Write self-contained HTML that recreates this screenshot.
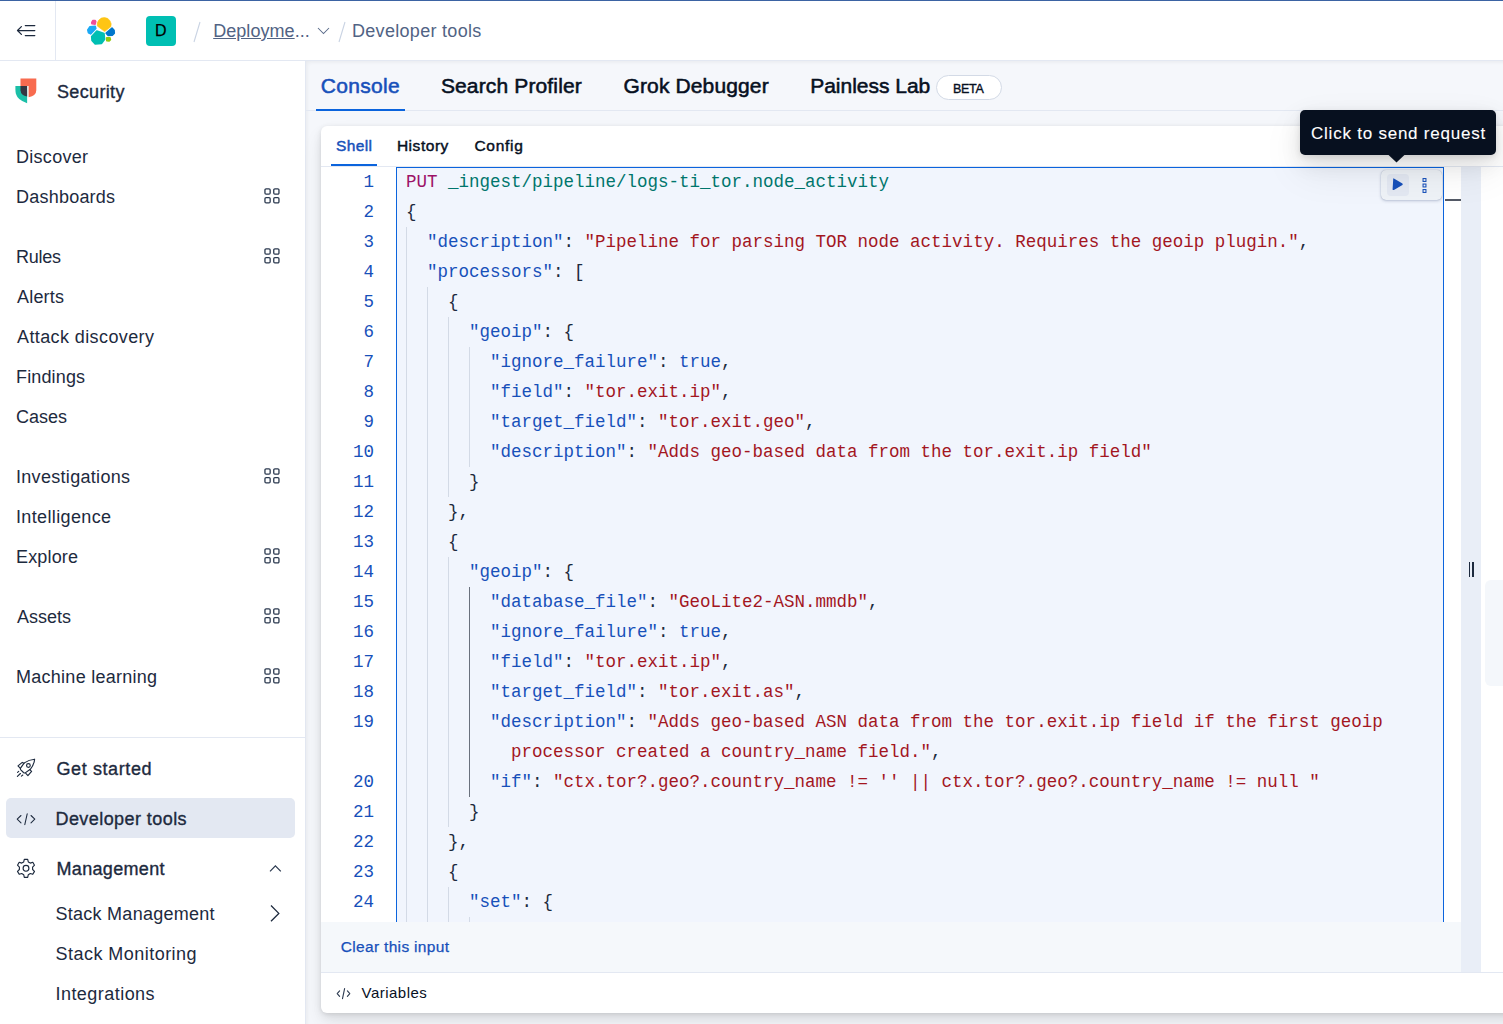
<!DOCTYPE html>
<html><head><meta charset="utf-8">
<style>
*{margin:0;padding:0;box-sizing:border-box}
html,body{width:1503px;height:1024px;overflow:hidden;background:#fff;font-family:"Liberation Sans",sans-serif;color:#1d2a3e}
.a{position:absolute}
.t{position:absolute;white-space:nowrap;line-height:1}
.nav{font-size:18px;color:#1d2a3e;letter-spacing:0.15px}
.med{-webkit-text-stroke:0.35px #1d2a3e}
.code{position:absolute;left:406px;top:167px;font-family:"Liberation Mono",monospace;font-size:17.5px;line-height:30px;white-space:pre;color:#1d2a3e}
.ln{position:absolute;left:322px;width:52px;top:167px;text-align:right;font-family:"Liberation Mono",monospace;font-size:17.5px;line-height:30px;color:#1750ba;white-space:pre}
.k{color:#1750ba}.s{color:#a3161f}.m{color:#9c1167}.u{color:#00756c}.b{color:#1750ba}
.g{position:absolute;width:1px;background:#d3dae6}
.tab{font-size:21px;font-weight:400;color:#07101f;-webkit-text-stroke:0.55px currentColor}
.stab{font-size:15.5px;font-weight:400;color:#07101f;-webkit-text-stroke:0.45px currentColor}
</style></head><body>

<!-- header -->
<div class="a" style="left:0;top:0;width:1503px;height:1px;background:#3b63a3"></div>
<div class="a" style="left:0;top:60px;width:1503px;height:1px;background:#e3e8f2"></div>
<div class="a" style="left:55px;top:1px;width:1px;height:59px;background:#e3e8f2"></div>
<svg class="a" style="left:16px;top:22px" width="20" height="16" viewBox="0 0 20 16"><g fill="none" stroke="#1d2a3e" stroke-width="1.25" stroke-linecap="round" stroke-linejoin="round"><path d="M1.6 8.5 H18.8 M5.4 4.6 L1.5 8.5 L5.4 12.4 M9.3 3.5 H18.8 M9.3 13.5 H18.8"/></g></svg>

<!-- elastic logo -->
<svg class="a" style="left:80px;top:10px" width="40" height="40" viewBox="80 10 40 40"><g stroke-linejoin="round" stroke-width="1.6">
<path d="M91.8 22.3 L92.8 20.6 L95.2 20.5 L95.7 21.5 L95.1 24.1 L91.9 23.8Z" fill="#f04e98" stroke="#f04e98"/>
<path d="M97.3 26 A7 7 0 1 1 110.8 26.8 L104.6 31.6 Z" fill="#fec514" stroke="#fec514" stroke-width="0.6"/>
<path d="M87.8 30 L89.8 26.8 L95.2 26.2 L95.8 28.4 L90.6 33.9 L88.5 32.8Z" fill="#1ba9f5" stroke="#1ba9f5"/>
<path d="M91.7 36.6 L96.8 31.1 L104 33.6 L104.6 39.2 L101.6 43.4 L95.2 43.9 L92 40.4Z" fill="#00bfb3" stroke="#00bfb3"/>
<path d="M106.2 33.2 L112 28 L114 30.2 L114.3 33.2 L112.3 35.3 L108.2 35.4Z" fill="#0077cc" stroke="#0077cc"/>
<path d="M106.7 37.9 L110 37.9 L110.4 39.6 L109.1 41 L106.8 40.8Z" fill="#93c90e" stroke="#93c90e"/>
</g></svg>

<div class="a" style="left:146px;top:16px;width:30px;height:30px;background:#00bfb3;border-radius:4px"></div>
<div class="t" style="left:145.5px;top:23px;width:30.5px;text-align:center;font-size:16px;color:#000;-webkit-text-stroke:0.25px #000">D</div>

<svg class="a" style="left:192px;top:21px" width="10" height="22"><path d="M8 1 L2 21" stroke="#c9d3e3" stroke-width="1.1"/></svg>
<div id="dep" class="t" style="left:213.20px;top:21.5px;font-size:18px;color:#516384;letter-spacing:0.050px"><span style="text-decoration:underline;text-underline-offset:1px">Deployme</span>...</div>
<svg class="a" style="left:316px;top:25px" width="15" height="11"><path d="M2 3 L7.5 8.5 L13 3" fill="none" stroke="#5a6b8a" stroke-width="1.05"/></svg>
<svg class="a" style="left:337px;top:21px" width="10" height="22"><path d="M8 1 L2 21" stroke="#c9d3e3" stroke-width="1.1"/></svg>
<div id="h2" class="t" style="left:352.00px;top:21.5px;font-size:18px;color:#516384;letter-spacing:0.300px">Developer tools</div>

<!-- sidebar -->
<div class="a" style="left:305px;top:61px;width:1px;height:963px;background:#e3e8f2"></div>


<!-- security -->
<svg class="a" style="left:15px;top:78px" width="23" height="26" viewBox="0 0 23 26">
<path d="M5.5 0.5 H21.3 V12.2 Q21.3 17.6 13.6 19.3 V8 H5.5Z" fill="#f86b4f"/>
<path d="M0.4 8 H12.1 V25.2 Q2.6 22.2 0.9 15.8 Q0.4 13.8 0.4 11.8 Z" fill="#1bbfa7"/>
<path d="M5.5 8 H12.1 V18.6 Q5.9 17.4 5.5 12.2 Z" fill="#343741"/>
</svg>
<div id="sec" class="t nav med" style="left:57.00px;top:83.00px;font-size:18px;letter-spacing:0.343px">Security</div>
<div id="n1" class="t nav" style="left:16.00px;top:147.7px;letter-spacing:0.284px">Discover</div>
<div id="n2" class="t nav" style="left:16.00px;top:187.6px;letter-spacing:0.223px">Dashboards</div>
<svg class="a" style="left:263px;top:187px" width="18" height="17"><path d="M3.1 1.85h2.9a1.15 1.15 0 0 1 1.15 1.15v2.9a1.15 1.15 0 0 1-1.15 1.15h-2.9a1.15 1.15 0 0 1-1.15-1.15v-2.9a1.15 1.15 0 0 1 1.15-1.15z M11.9 1.85h2.9a1.15 1.15 0 0 1 1.15 1.15v2.9a1.15 1.15 0 0 1-1.15 1.15h-2.9a1.15 1.15 0 0 1-1.15-1.15v-2.9a1.15 1.15 0 0 1 1.15-1.15z M3.1 10.65h2.9a1.15 1.15 0 0 1 1.15 1.15v2.9a1.15 1.15 0 0 1-1.15 1.15h-2.9a1.15 1.15 0 0 1-1.15-1.15v-2.9a1.15 1.15 0 0 1 1.15-1.15z M11.9 10.65h2.9a1.15 1.15 0 0 1 1.15 1.15v2.9a1.15 1.15 0 0 1-1.15 1.15h-2.9a1.15 1.15 0 0 1-1.15-1.15v-2.9a1.15 1.15 0 0 1 1.15-1.15z" fill="none" stroke="#2b394f" stroke-width="1.3"/></svg>
<div id="n3" class="t nav" style="left:16.00px;top:247.7px;letter-spacing:-0.250px">Rules</div>
<svg class="a" style="left:263px;top:247px" width="18" height="17"><path d="M3.1 1.85h2.9a1.15 1.15 0 0 1 1.15 1.15v2.9a1.15 1.15 0 0 1-1.15 1.15h-2.9a1.15 1.15 0 0 1-1.15-1.15v-2.9a1.15 1.15 0 0 1 1.15-1.15z M11.9 1.85h2.9a1.15 1.15 0 0 1 1.15 1.15v2.9a1.15 1.15 0 0 1-1.15 1.15h-2.9a1.15 1.15 0 0 1-1.15-1.15v-2.9a1.15 1.15 0 0 1 1.15-1.15z M3.1 10.65h2.9a1.15 1.15 0 0 1 1.15 1.15v2.9a1.15 1.15 0 0 1-1.15 1.15h-2.9a1.15 1.15 0 0 1-1.15-1.15v-2.9a1.15 1.15 0 0 1 1.15-1.15z M11.9 10.65h2.9a1.15 1.15 0 0 1 1.15 1.15v2.9a1.15 1.15 0 0 1-1.15 1.15h-2.9a1.15 1.15 0 0 1-1.15-1.15v-2.9a1.15 1.15 0 0 1 1.15-1.15z" fill="none" stroke="#2b394f" stroke-width="1.3"/></svg>
<div id="n4" class="t nav" style="left:17.00px;top:287.7px;letter-spacing:0.200px">Alerts</div>
<div id="n5" class="t nav" style="left:17.00px;top:327.7px;letter-spacing:0.398px">Attack discovery</div>
<div id="n6" class="t nav" style="left:16.00px;top:367.7px;letter-spacing:0.145px">Findings</div>
<div id="n7" class="t nav" style="left:16.00px;top:407.7px;letter-spacing:0.000px">Cases</div>
<div id="n8" class="t nav" style="left:16.00px;top:467.7px;letter-spacing:0.304px">Investigations</div>
<svg class="a" style="left:263px;top:467px" width="18" height="17"><path d="M3.1 1.85h2.9a1.15 1.15 0 0 1 1.15 1.15v2.9a1.15 1.15 0 0 1-1.15 1.15h-2.9a1.15 1.15 0 0 1-1.15-1.15v-2.9a1.15 1.15 0 0 1 1.15-1.15z M11.9 1.85h2.9a1.15 1.15 0 0 1 1.15 1.15v2.9a1.15 1.15 0 0 1-1.15 1.15h-2.9a1.15 1.15 0 0 1-1.15-1.15v-2.9a1.15 1.15 0 0 1 1.15-1.15z M3.1 10.65h2.9a1.15 1.15 0 0 1 1.15 1.15v2.9a1.15 1.15 0 0 1-1.15 1.15h-2.9a1.15 1.15 0 0 1-1.15-1.15v-2.9a1.15 1.15 0 0 1 1.15-1.15z M11.9 10.65h2.9a1.15 1.15 0 0 1 1.15 1.15v2.9a1.15 1.15 0 0 1-1.15 1.15h-2.9a1.15 1.15 0 0 1-1.15-1.15v-2.9a1.15 1.15 0 0 1 1.15-1.15z" fill="none" stroke="#2b394f" stroke-width="1.3"/></svg>
<div id="n9" class="t nav" style="left:16.00px;top:507.7px;letter-spacing:0.361px">Intelligence</div>
<div id="n10" class="t nav" style="left:16.00px;top:547.7px;letter-spacing:0.167px">Explore</div>
<svg class="a" style="left:263px;top:547px" width="18" height="17"><path d="M3.1 1.85h2.9a1.15 1.15 0 0 1 1.15 1.15v2.9a1.15 1.15 0 0 1-1.15 1.15h-2.9a1.15 1.15 0 0 1-1.15-1.15v-2.9a1.15 1.15 0 0 1 1.15-1.15z M11.9 1.85h2.9a1.15 1.15 0 0 1 1.15 1.15v2.9a1.15 1.15 0 0 1-1.15 1.15h-2.9a1.15 1.15 0 0 1-1.15-1.15v-2.9a1.15 1.15 0 0 1 1.15-1.15z M3.1 10.65h2.9a1.15 1.15 0 0 1 1.15 1.15v2.9a1.15 1.15 0 0 1-1.15 1.15h-2.9a1.15 1.15 0 0 1-1.15-1.15v-2.9a1.15 1.15 0 0 1 1.15-1.15z M11.9 10.65h2.9a1.15 1.15 0 0 1 1.15 1.15v2.9a1.15 1.15 0 0 1-1.15 1.15h-2.9a1.15 1.15 0 0 1-1.15-1.15v-2.9a1.15 1.15 0 0 1 1.15-1.15z" fill="none" stroke="#2b394f" stroke-width="1.3"/></svg>
<div id="n11" class="t nav" style="left:17.00px;top:607.7px;letter-spacing:0.000px">Assets</div>
<svg class="a" style="left:263px;top:607px" width="18" height="17"><path d="M3.1 1.85h2.9a1.15 1.15 0 0 1 1.15 1.15v2.9a1.15 1.15 0 0 1-1.15 1.15h-2.9a1.15 1.15 0 0 1-1.15-1.15v-2.9a1.15 1.15 0 0 1 1.15-1.15z M11.9 1.85h2.9a1.15 1.15 0 0 1 1.15 1.15v2.9a1.15 1.15 0 0 1-1.15 1.15h-2.9a1.15 1.15 0 0 1-1.15-1.15v-2.9a1.15 1.15 0 0 1 1.15-1.15z M3.1 10.65h2.9a1.15 1.15 0 0 1 1.15 1.15v2.9a1.15 1.15 0 0 1-1.15 1.15h-2.9a1.15 1.15 0 0 1-1.15-1.15v-2.9a1.15 1.15 0 0 1 1.15-1.15z M11.9 10.65h2.9a1.15 1.15 0 0 1 1.15 1.15v2.9a1.15 1.15 0 0 1-1.15 1.15h-2.9a1.15 1.15 0 0 1-1.15-1.15v-2.9a1.15 1.15 0 0 1 1.15-1.15z" fill="none" stroke="#2b394f" stroke-width="1.3"/></svg>
<div id="n12" class="t nav" style="left:16.00px;top:667.7px;letter-spacing:0.267px">Machine learning</div>
<svg class="a" style="left:263px;top:667px" width="18" height="17"><path d="M3.1 1.85h2.9a1.15 1.15 0 0 1 1.15 1.15v2.9a1.15 1.15 0 0 1-1.15 1.15h-2.9a1.15 1.15 0 0 1-1.15-1.15v-2.9a1.15 1.15 0 0 1 1.15-1.15z M11.9 1.85h2.9a1.15 1.15 0 0 1 1.15 1.15v2.9a1.15 1.15 0 0 1-1.15 1.15h-2.9a1.15 1.15 0 0 1-1.15-1.15v-2.9a1.15 1.15 0 0 1 1.15-1.15z M3.1 10.65h2.9a1.15 1.15 0 0 1 1.15 1.15v2.9a1.15 1.15 0 0 1-1.15 1.15h-2.9a1.15 1.15 0 0 1-1.15-1.15v-2.9a1.15 1.15 0 0 1 1.15-1.15z M11.9 10.65h2.9a1.15 1.15 0 0 1 1.15 1.15v2.9a1.15 1.15 0 0 1-1.15 1.15h-2.9a1.15 1.15 0 0 1-1.15-1.15v-2.9a1.15 1.15 0 0 1 1.15-1.15z" fill="none" stroke="#2b394f" stroke-width="1.3"/></svg>
<div class="a" style="left:0;top:737px;width:305px;height:1px;background:#e3e8f2"></div>
<div class="a" style="left:6px;top:798px;width:289px;height:40px;background:#e3e8f2;border-radius:5px"></div>
<div id="b1" class="t nav med" style="left:56.50px;top:759.6px;letter-spacing:0.600px">Get started</div>
<div id="b2" class="t nav med" style="left:55.50px;top:809.70px;letter-spacing:0.428px">Developer tools</div>
<div id="b3" class="t nav med" style="left:56.50px;top:859.50px;letter-spacing:0.331px">Management</div>
<div id="b4" class="t nav" style="left:55.50px;top:904.90px;letter-spacing:0.266px">Stack Management</div>
<div id="b5" class="t nav" style="left:55.50px;top:945.00px;letter-spacing:0.467px">Stack Monitoring</div>
<div id="b6" class="t nav" style="left:55.50px;top:984.90px;letter-spacing:0.454px">Integrations</div>
<svg class="a" style="left:268px;top:862px" width="16" height="12"><path d="M2 9.4 L7.4 3.9 L12.8 9.4" fill="none" stroke="#2b394f" stroke-width="1.2"/></svg>
<svg class="a" style="left:268px;top:903px" width="14" height="20"><path d="M3 2.5 L10.8 10.4 L3 18.3" fill="none" stroke="#1d2a3e" stroke-width="1.3"/></svg>
<!-- rocket -->
<svg class="a" style="left:15px;top:757px" width="22" height="22" viewBox="0 0 22 22"><g fill="none" stroke="#1d2a3e" stroke-width="1.15" stroke-linejoin="round" stroke-linecap="round">
<path d="M9.3 5.9 Q14 2.6 19.6 2.2 Q19.2 7.5 15.3 12.3 L10.6 15.6 Q9.5 16.4 8.5 15.5 L5.8 12.8 Q5 11.8 5.7 10.8 Z"/>
<path d="M8.9 6.2 L7.3 5.4 L3 8.9 L5.4 11.3 M14.8 12.6 L16.6 14.3 L12.9 18.6 L10.8 16.3"/>
<circle cx="13.4" cy="8.5" r="1.85"/><path d="M2.4 19.4 L5.4 16.5 M2.6 15.4 L3.7 14.4 M6.4 19.1 L7.8 18"/></g></svg>
<!-- code icon -->
<svg class="a" style="left:15px;top:812px" width="22" height="15" viewBox="0 0 22 15"><g fill="none" stroke="#1d2a3e" stroke-width="1.05" stroke-linecap="round" stroke-linejoin="round"><path d="M6 3.5 L2.2 7.2 L6 10.9 M16 3.5 L19.8 7.2 L16 10.9 M12.2 1.8 L9.8 12.6"/></g></svg>
<!-- gear -->
<svg class="a" style="left:15px;top:856.7px" width="22" height="23" viewBox="0 0 22 23"><g fill="none" stroke="#1d2a3e" stroke-width="1.15" stroke-linejoin="round">
<path d="M9.3 2.3 H12.7 L13.3 4.9 L15.3 6.1 L17.8 5.3 L19.5 8.2 L17.6 10.1 V12.5 L19.5 14.4 L17.8 17.3 L15.3 16.5 L13.3 17.7 L12.7 20.3 H9.3 L8.7 17.7 L6.7 16.5 L4.2 17.3 L2.5 14.4 L4.4 12.5 V10.1 L2.5 8.2 L4.2 5.3 L6.7 6.1 L8.7 4.9 Z"/>
<circle cx="11" cy="11.3" r="2.9"/></g></svg>


<!-- main bg -->
<div class="a" style="left:306px;top:61px;width:1197px;height:963px;background:#f5f7fb;box-shadow:inset 3px 3px 4px -2px rgba(0,0,0,0.06)"></div>
<!-- tabs -->
<div class="a" style="left:306px;top:110px;width:1197px;height:1px;background:#e3e8f2"></div>
<div class="a" style="left:316px;top:109px;width:89px;height:2px;background:#0b64dd"></div>
<div id="tab1" class="t tab" style="left:320.80px;top:74.80px;color:#1750ba;letter-spacing:0.301px">Console</div>
<div id="tab2" class="t tab" style="left:440.90px;top:74.80px;letter-spacing:0.143px">Search Profiler</div>
<div id="tab3" class="t tab" style="left:623.50px;top:74.80px;letter-spacing:0.133px">Grok Debugger</div>
<div id="tab4" class="t tab" style="left:810.20px;top:74.80px;letter-spacing:-0.015px">Painless Lab</div>
<div class="a" style="left:936px;top:75px;width:66px;height:25px;border:1px solid #d3dae6;border-radius:13px;background:#fff"></div>
<div id="beta" class="t" style="left:953.10px;top:82.5px;font-size:12.5px;font-weight:400;-webkit-text-stroke:0.35px #07101f;letter-spacing:-0.335px;color:#07101f">BETA</div>
<!-- panel -->
<div class="a" style="left:321px;top:126px;width:1200px;height:887px;background:#fff;border-radius:6px;box-shadow:0 1px 4px rgba(0,0,0,0.09),0 4px 10px rgba(0,0,0,0.07),0 10px 20px rgba(0,0,0,0.07)"></div>
<div id="st1" class="t stab" style="left:336.00px;top:137.60px;color:#1750ba;letter-spacing:0.350px">Shell</div>
<div id="st2" class="t stab" style="left:396.90px;top:137.60px;letter-spacing:0.535px">History</div>
<div id="st3" class="t stab" style="left:474.40px;top:137.60px;letter-spacing:0.720px">Config</div>
<div class="a" style="left:321px;top:166px;width:1182px;height:1px;background:#e3e8f2"></div>
<div class="a" style="left:331px;top:164px;width:46px;height:2px;background:#0b64dd"></div>
<!-- editor -->
<div class="a" style="left:396px;top:167px;width:1048px;height:755px;background:#f1f5fd;border:1px solid #0b64dd;border-bottom:none"></div>
<div class="a" style="left:406px;top:227px;width:1px;height:695px;background:#d3dae6"></div>
<div class="a" style="left:427px;top:287px;width:1px;height:635px;background:#d3dae6"></div>
<div class="a" style="left:448px;top:317px;width:1px;height:180px;background:#d3dae6"></div>
<div class="a" style="left:469px;top:347px;width:1px;height:120px;background:#d3dae6"></div>
<div class="a" style="left:448px;top:557px;width:1px;height:270px;background:#d3dae6"></div>
<div class="a" style="left:469px;top:587px;width:1px;height:210px;background:#6a717d"></div>
<div class="a" style="left:448px;top:887px;width:1px;height:35px;background:#d3dae6"></div>
<div class="a" style="left:469px;top:917px;width:1px;height:5px;background:#d3dae6"></div>
<div class="ln" style="overflow:hidden;height:754px">1
2
3
4
5
6
7
8
9
10
11
12
13
14
15
16
17
18
19

20
21
22
23
24
25</div>
<div class="code" style="overflow:hidden;height:754px;width:1030px"><span class="m">PUT</span> <span class="u">_ingest/pipeline/logs-ti_tor.node_activity</span>
{
  <span class="k">"description"</span>: <span class="s">"Pipeline for parsing TOR node activity. Requires the geoip plugin."</span>,
  <span class="k">"processors"</span>: [
    {
      <span class="k">"geoip"</span>: {
        <span class="k">"ignore_failure"</span>: <span class="b">true</span>,
        <span class="k">"field"</span>: <span class="s">"tor.exit.ip"</span>,
        <span class="k">"target_field"</span>: <span class="s">"tor.exit.geo"</span>,
        <span class="k">"description"</span>: <span class="s">"Adds geo-based data from the tor.exit.ip field"</span>
      }
    },
    {
      <span class="k">"geoip"</span>: {
        <span class="k">"database_file"</span>: <span class="s">"GeoLite2-ASN.mmdb"</span>,
        <span class="k">"ignore_failure"</span>: <span class="b">true</span>,
        <span class="k">"field"</span>: <span class="s">"tor.exit.ip"</span>,
        <span class="k">"target_field"</span>: <span class="s">"tor.exit.as"</span>,
        <span class="k">"description"</span>: <span class="s">"Adds geo-based ASN data from the tor.exit.ip field if the first geoip</span>
          <span class="s">processor created a country_name field."</span>,
        <span class="k">"if"</span>: <span class="s">"ctx.tor?.geo?.country_name != '' || ctx.tor?.geo?.country_name != null "</span>
      }
    },
    {
      <span class="k">"set"</span>: {
        <span class="k">"field"</span>: <span class="s">"event.kind"</span>,</div>


<!-- scroll cols -->
<div class="a" style="left:1444px;top:167px;width:17px;height:755px;background:#fff"></div>
<div class="a" style="left:1445px;top:199px;width:16px;height:2px;background:#535966"></div>
<div class="a" style="left:1461px;top:167px;width:20px;height:805px;background:#e9eef7"></div>
<div class="a" style="left:1469px;top:562px;width:1px;height:15px;background:#1d2a3e"></div>
<div class="a" style="left:1472px;top:562px;width:2px;height:15px;background:#1d2a3e"></div>
<div class="a" style="left:1485px;top:580px;width:30px;height:106px;background:#f4f7fb;border-radius:6px"></div>
<!-- footer -->
<div class="a" style="left:321px;top:922px;width:1140px;height:50px;background:#f5f8fb"></div>
<div class="a" style="left:321px;top:972px;width:1182px;height:1px;background:#e3e8f2"></div>
<div id="clr" class="t" style="left:340.80px;top:938.50px;font-size:15.5px;color:#1750ba;letter-spacing:0.318px;-webkit-text-stroke:0.25px #1750ba">Clear this input</div>
<svg class="a" style="left:335px;top:986px" width="17" height="15" viewBox="0 0 17 15"><g fill="none" stroke="#2b394f" stroke-width="1.1" stroke-linecap="round" stroke-linejoin="round"><path d="M4.6 4.8 L2.2 7.6 L4.6 10.4 M12.4 4.8 L14.8 7.6 L12.4 10.4 M9.6 2.6 L7.5 12.6"/></g></svg>
<div id="var" class="t" style="left:361.60px;top:985.3px;font-size:15px;color:#07101f;letter-spacing:0.475px">Variables</div>
<!-- action box -->
<div class="a" style="left:1380.5px;top:169.5px;width:61px;height:30.5px;background:#eef2f7;border-radius:5px;box-shadow:0 1px 3px rgba(30,50,100,0.25),0 0 1px rgba(30,50,100,0.3)"></div>
<div class="a" style="left:1387px;top:174px;width:22px;height:22px;background:#e3e8f2;border-radius:4px"></div>
<svg class="a" style="left:1390px;top:176px" width="16" height="17" viewBox="0 0 16 17"><path d="M3.2 3.4 Q2.6 2.2 3.9 2.6 L12.4 7.6 Q13.2 8.3 12.4 9 L3.9 14 Q2.6 14.4 2.6 13.2 Z" fill="#1750ba"/></svg>
<svg class="a" style="left:1420px;top:176px" width="9" height="19" viewBox="0 0 9 19"><g fill="none" stroke="#1750ba" stroke-width="1.05"><rect x="3.05" y="2.55" width="2.9" height="2.9"/><rect x="3.05" y="8.05" width="2.9" height="2.9"/><rect x="3.05" y="13.55" width="2.9" height="2.9"/></g></svg>
<!-- tooltip -->
<div class="a" style="left:1300px;top:110px;width:196px;height:45px;background:#07101f;border-radius:5px;box-shadow:0 2px 6px rgba(0,0,0,0.1),0 8px 22px rgba(0,0,0,0.09),0 16px 40px rgba(0,0,0,0.08)"></div>
<svg class="a" style="left:1386px;top:154px" width="22" height="10"><path d="M1.5 0 L10.5 8.6 L19.5 0Z" fill="#07101f"/></svg>
<div id="tip" class="t" style="left:1311.00px;top:124.90px;font-size:17px;color:#fff;letter-spacing:0.770px;-webkit-text-stroke:0.1px #fff">Click to send request</div>

</body></html>
